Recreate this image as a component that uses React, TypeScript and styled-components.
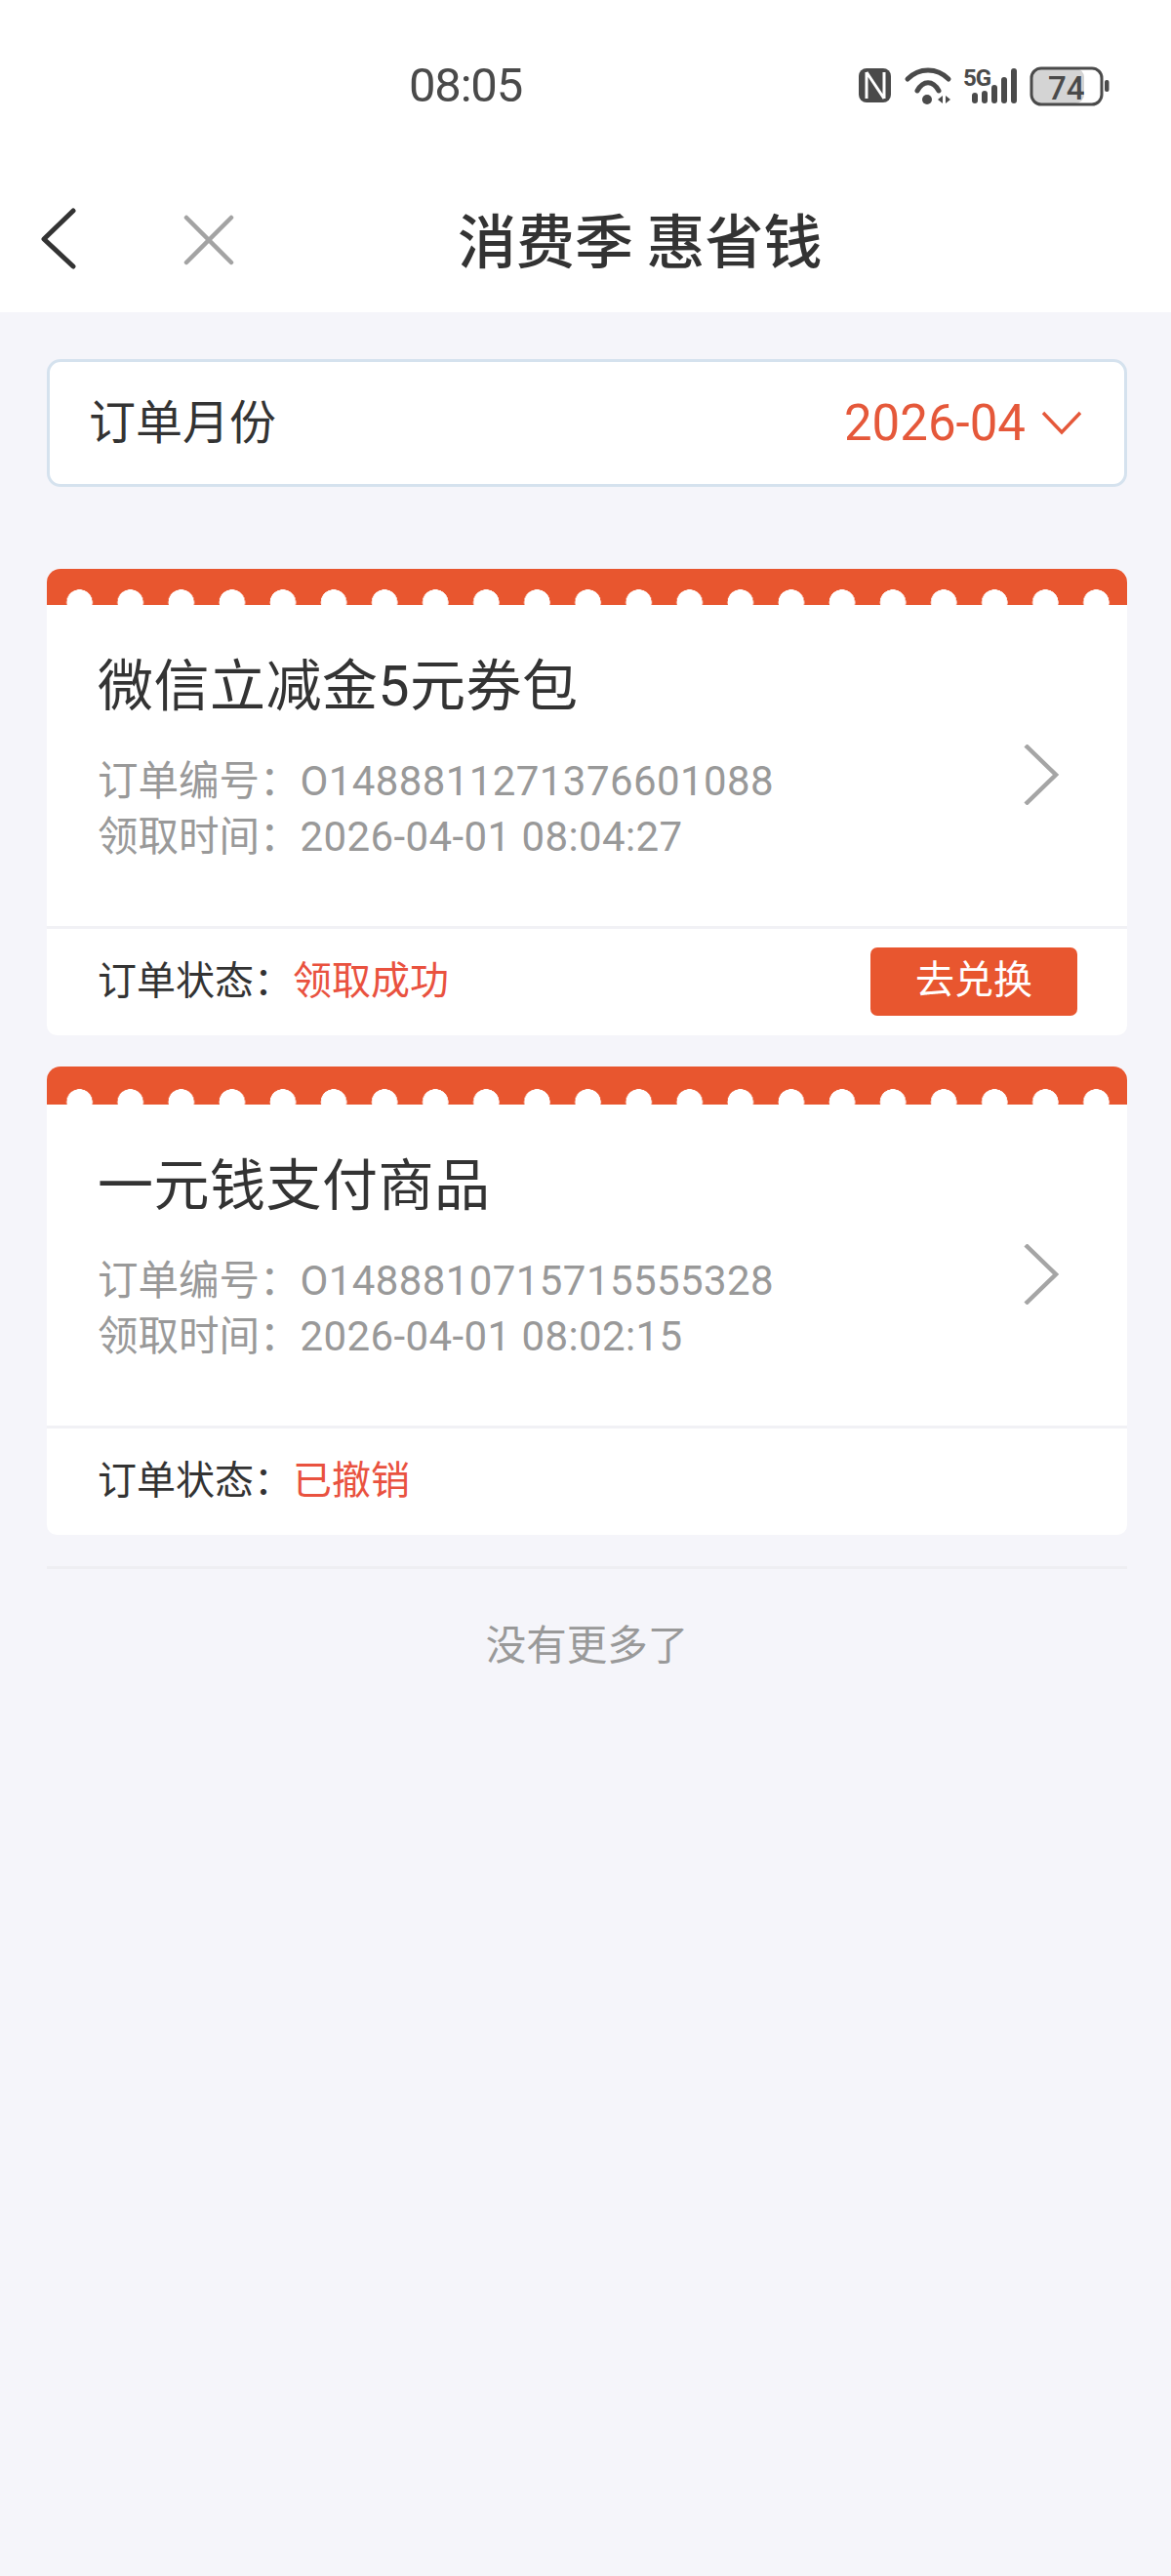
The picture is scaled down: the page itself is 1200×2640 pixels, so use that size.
import React from "react";
import styled, { createGlobalStyle } from "styled-components";

const CJK = `"Noto Sans CJK SC", "Noto Sans", sans-serif`;
const MIXED = `Roboto, "Noto Sans CJK SC", sans-serif`;
const COLON = "\uFF1A";

const Global = createGlobalStyle`
  html, body { margin: 0; padding: 0; background: #f5f5fa; }
  * { box-sizing: border-box; }
`;

const Page = styled.div`
  width: 1200px;
  height: 2640px;
  background: #f5f5fa;
  font-family: ${CJK};
  overflow: hidden;
`;

const StatusBar = styled.div`
  height: 180px;
  background: #fff;
  display: flex;
  align-items: flex-start;
  padding: 60px 0 0 419px;
`;

const Clock = styled.span`
  font-family: "Roboto", sans-serif;
  font-size: 49px;
  line-height: 56px;
  color: #4a4a4a;
  letter-spacing: -1.2px;
`;

const StatusIcons = styled.svg`
  position: relative;
  top: 4px;
  margin-left: 345px;
  display: block;
  flex: none;
`;

const NavBar = styled.div`
  height: 140px;
  background: #fff;
  display: flex;
  align-items: flex-start;
  padding: 32px 0 0 40px;
`;

const BackIcon = styled.svg`
  display: block;
  flex: none;
`;

const CloseIcon = styled.svg`
  display: block;
  flex: none;
  margin: 7px 0 0 107px;
`;

const NavTitle = styled.h1`
  margin: -6px 0 0 226px;
  font-size: 60px;
  line-height: 76px;
  font-weight: 500;
  color: #333;
  white-space: nowrap;
`;

const Content = styled.main`
  padding: 48px 45px 0 48px;
`;

const MonthPicker = styled.div`
  height: 131px;
  background: #fff;
  border: 3px solid #d5e2ee;
  border-radius: 14px;
  display: flex;
  align-items: center;
  padding: 0 43px 0 40px;
  margin-bottom: 84px;
`;

const PickerLabel = styled.span`
  font-size: 48px;
  color: #333;
  flex: 1;
  margin-top: -9px;
`;

const PickerValue = styled.span`
  font-family: ${MIXED};
  font-size: 51px;
  color: #e5583a;
  margin-right: 16px;
`;

const PickerArrow = styled.svg`
  display: block;
  flex: none;
`;

const Card = styled.article`
  background: #fff;
  border-radius: 14px 14px 10px 10px;
  overflow: hidden;
  margin-bottom: 32px;
`;

const Stripe = styled.div<{ $h: number }>`
  height: ${(p) => p.$h}px;
  background-color: #e8562f;
  background-image: radial-gradient(
    circle 13.5px at 33.5px calc(100% - 2.5px),
    #fff 97%,
    transparent 100%
  );
  background-size: 52.1px 100%;
  background-repeat: repeat-x;
`;

const CardBody = styled.div`
  height: 329px;
  padding: 44px 68px 0 52px;
  display: flex;
  justify-content: space-between;
  align-items: flex-start;
`;

const CardInfo = styled.div`
  display: flex;
  flex-direction: column;
`;

const CardTitle = styled.h2`
  margin: 0 0 28px;
  font-family: ${MIXED};
  font-size: 57px;
  line-height: 80px;
  font-weight: 400;
  color: #333;
  white-space: nowrap;
  letter-spacing: 0.5px;
`;

const MetaLine = styled.div`
  font-family: ${MIXED};
  font-size: 42px;
  line-height: 57px;
  color: #999;
  white-space: nowrap;
  letter-spacing: 0.4px;
`;

const MetaLabel = styled.span`
  font-family: ${CJK};
  font-size: 41.5px;
  line-height: 0;
  letter-spacing: 0;
`;

const Chevron = styled.svg`
  display: block;
  flex: none;
  margin-top: 99px;
`;

const CardFooter = styled.div`
  height: 112px;
  border-top: 3px solid #f1f1f5;
  display: flex;
  align-items: center;
  padding: 0 51px 0 52px;
  font-size: 40px;
`;

const StatusLabel = styled.span`
  color: #333;
  margin-top: -10px;
`;

const StatusValue = styled.span`
  color: #e9523f;
  flex: 1;
  margin-top: -10px;
`;

const ActionButton = styled.button`
  width: 212px;
  height: 70px;
  margin-top: -1px;
  border: 0;
  border-radius: 7px;
  background: #e8562f;
  color: #fff;
  font-family: ${CJK};
  font-size: 40px;
  line-height: 58px;
  padding: 0 0 10px;
`;

const EndRule = styled.div`
  height: 3px;
  background: #eeeef2;
`;

const EndNote = styled.div`
  margin-top: 47px;
  text-align: center;
  font-size: 41.5px;
  line-height: 56px;
  color: #999;
`;

const orders = [
  {
    title: "微信立减金5元券包",
    no: "O1488811271376601088",
    time: "2026-04-01 08:04:27",
    status: "领取成功",
    action: "去兑换",
    stripe: 37,
  },
  {
    title: "一元钱支付商品",
    no: "O1488810715715555328",
    time: "2026-04-01 08:02:15",
    status: "已撤销",
    stripe: 39,
  },
];

export default function App() {
  return (
    <Page>
      <Global />
      <StatusBar>
        <Clock>08:05</Clock>
        <StatusIcons width="262" height="50" viewBox="878 64 262 50">
          {/* NFC */}
          <rect x="878" y="70" width="33" height="35" rx="8" fill="#4a4a4a" />
          <path d="M886 74v27M886 74l18 27M904 74v27" stroke="#fff" strokeWidth="3" fill="none" />
          {/* wifi */}
          <path d="M928 81c12-12 30-12 42 0" stroke="#4a4a4a" strokeWidth="5" fill="none" strokeLinecap="round" />
          <path d="M938 93c6-11 16-11 22 0" stroke="#4a4a4a" strokeWidth="5" fill="none" strokeLinecap="round" />
          <circle cx="948" cy="102" r="5" fill="#4a4a4a" />
          <path d="M964 98l-5 4 5 4zM967 98l5 4-5 4z" fill="#4a4a4a" />
          {/* 5G */}
          <text x="985" y="88" fontFamily="Roboto, sans-serif" fontWeight="700" fontSize="24" letterSpacing="-1" fill="#4a4a4a">5G</text>
          {[
            [997, 95],
            [1007, 93],
            [1017, 87],
            [1027, 79],
            [1037, 70],
          ].map(([x, y]) => (
            <line key={x} x1={x} y1={y + 3} x2={x} y2={103} stroke="#4a4a4a" strokeWidth="6" strokeLinecap="round" />
          ))}
          {/* battery */}
          <rect x="1056" y="70" width="53" height="36" rx="9" fill="#d4d4d4" />
          <rect x="1055" y="70" width="72" height="37" rx="10" fill="none" stroke="#4a4a4a" strokeWidth="3" />
          <rect x="1130" y="82" width="4.5" height="12" rx="2" fill="#4a4a4a" />
          <text x="1072" y="102" fontFamily="Roboto, sans-serif" fontWeight="500" fontSize="33" fill="#4a4a4a">74</text>
        </StatusIcons>
      </StatusBar>
      <NavBar>
        <BackIcon width="40" height="64" viewBox="0 0 40 64">
          <path d="M35 4 L5 33 L35 61" fill="none" stroke="#333" strokeWidth="5" strokeLinecap="round" strokeLinejoin="round" />
        </BackIcon>
        <CloseIcon width="56" height="56" viewBox="0 0 56 56">
          <path d="M4 4 L50 50 M50 4 L4 50" fill="none" stroke="#a3a3a3" strokeWidth="4.5" strokeLinecap="round" />
        </CloseIcon>
        <NavTitle>消费季 惠省钱</NavTitle>
      </NavBar>
      <Content>
        <MonthPicker>
          <PickerLabel>订单月份</PickerLabel>
          <PickerValue>2026-04</PickerValue>
          <PickerArrow width="42" height="28" viewBox="0 0 42 28">
            <path d="M2 3 L21 23 L40 3" fill="none" stroke="#e5583a" strokeWidth="3.4" />
          </PickerArrow>
        </MonthPicker>
        {orders.map((o) => (
          <Card key={o.no}>
            <Stripe $h={o.stripe} />
            <CardBody>
              <CardInfo>
                <CardTitle>{o.title}</CardTitle>
                <MetaLine><MetaLabel>订单编号{COLON}</MetaLabel>{o.no}</MetaLine>
                <MetaLine><MetaLabel>领取时间{COLON}</MetaLabel>{o.time}</MetaLine>
              </CardInfo>
              <Chevron width="40" height="62" viewBox="0 0 40 62">
                <path d="M4 1 L35 31 L4 61" fill="none" stroke="#a5a5a5" strokeWidth="4.5" />
              </Chevron>
            </CardBody>
            <CardFooter>
              <StatusLabel>订单状态{COLON}</StatusLabel>
              <StatusValue>{o.status}</StatusValue>
              {o.action && <ActionButton>{o.action}</ActionButton>}
            </CardFooter>
          </Card>
        ))}
        <EndRule />
        <EndNote>没有更多了</EndNote>
      </Content>
    </Page>
  );
}
